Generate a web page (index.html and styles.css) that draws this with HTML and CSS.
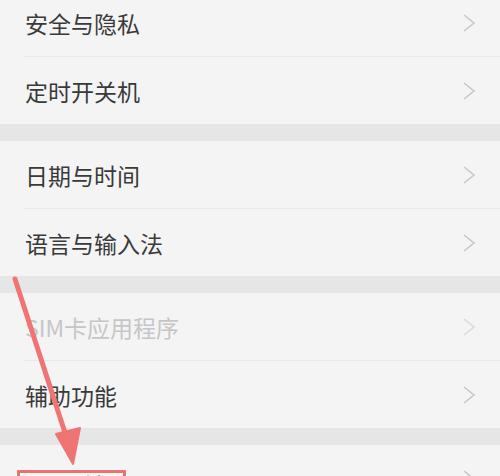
FILE: index.html
```html
<!DOCTYPE html>
<html lang="zh-CN">
<head>
<meta charset="utf-8">
<title>设置</title>
<link rel="stylesheet" href="styles.css">
</head>
<body>
<div class="page">
  <div class="list">
    <div class="group">
      <div class="item"><div class="item-inner"><span class="label">安全与隐私</span><svg class="chev" viewBox="0 0 14 20"><polyline points="2,2 12,10 2,18"/></svg></div></div>
      <div class="item"><div class="item-inner"><span class="label">定时开关机</span><svg class="chev" viewBox="0 0 14 20"><polyline points="2,2 12,10 2,18"/></svg></div></div>
    </div>
    <div class="group">
      <div class="item"><div class="item-inner"><span class="label">日期与时间</span><svg class="chev" viewBox="0 0 14 20"><polyline points="2,2 12,10 2,18"/></svg></div></div>
      <div class="item"><div class="item-inner"><span class="label">语言与输入法</span><svg class="chev" viewBox="0 0 14 20"><polyline points="2,2 12,10 2,18"/></svg></div></div>
    </div>
    <div class="group">
      <div class="item disabled"><div class="item-inner"><span class="label">SIM卡应用程序</span><svg class="chev" viewBox="0 0 14 20"><polyline points="2,2 12,10 2,18"/></svg></div></div>
      <div class="item"><div class="item-inner"><span class="label">辅助功能</span><svg class="chev" viewBox="0 0 14 20"><polyline points="2,2 12,10 2,18"/></svg></div></div>
    </div>
    <div class="group">
      <div class="item"><div class="item-inner"><span class="label boxed">还原手机</span><svg class="chev" viewBox="0 0 14 20"><polyline points="2,2 12,10 2,18"/></svg></div></div>
    </div>
  </div>
  <svg class="arrow" viewBox="0 0 500 476" width="500" height="476">
    <line x1="15" y1="279" x2="68" y2="442" class="shaft"/>
    <polygon points="56,434 80,428 73,464" class="head"/>
  </svg>
</div>
</body>
</html>
```
FILE: styles.css
```css
html, body {
  margin: 0;
  padding: 0;
  background: #e6e6e6;
}
body {
  font-family: "Noto Sans CJK SC", "Noto Sans", sans-serif;
  overflow: hidden;
}
.page {
  position: relative;
  width: 500px;
  height: 476px;
  overflow: hidden;
}
.list {
  margin-top: -11px;
  display: flex;
  flex-direction: column;
  gap: 17px;
}
.group {
  background: #f4f4f4;
}
.item {
  padding-left: 24px;
}
.item-inner {
  height: 67px;
  display: flex;
  align-items: center;
  justify-content: space-between;
  padding-right: 24px;
  box-sizing: border-box;
}
.item + .item .item-inner {
  height: 68px;
  border-top: 1px solid #e8e8e8;
}
.label {
  font-size: 23px;
  color: #3a3a3a;
  padding-left: 1px;
  line-height: 30px;
}
.disabled .label {
  color: #c6c6c6;
}
.chev {
  width: 14px;
  height: 20px;
  fill: none;
  stroke: #c8c8c8;
  stroke-width: 1.6;
}
.disabled .chev {
  stroke: #dadada;
}
.boxed {
  position: relative;
  top: 6px;
  line-height: 24px;
  margin-left: -7px;
  padding: 0 7px 0 4px;
  border: 3px solid #e97272;
  border-radius: 1px;
}
.arrow {
  position: absolute;
  left: 0;
  top: 0;
  pointer-events: none;
}
.shaft {
  stroke: #ef7575;
  stroke-width: 5;
  stroke-linecap: round;
}
.head {
  fill: #ef7575;
  stroke: #ef7575;
  stroke-width: 2;
  stroke-linejoin: round;
}
```
